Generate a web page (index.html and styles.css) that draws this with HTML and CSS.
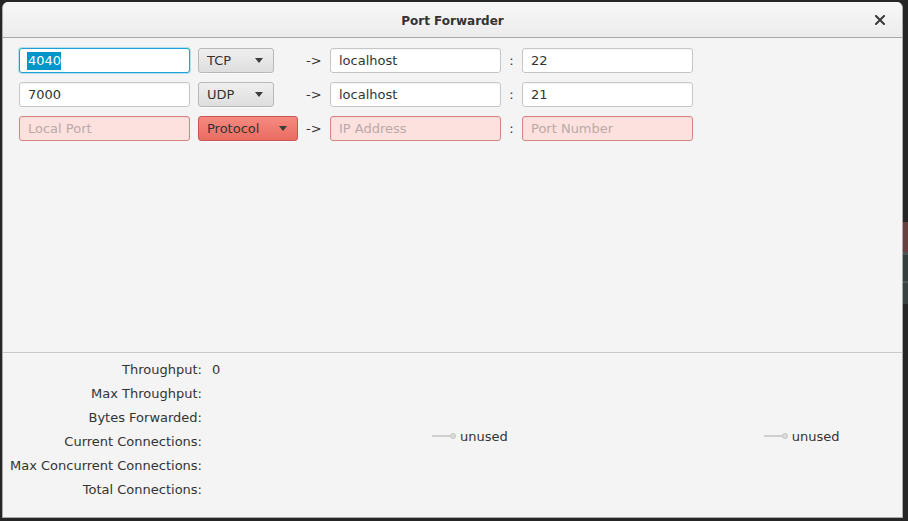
FILE: index.html
```html
<!DOCTYPE html>
<html>
<head>
<meta charset="utf-8">
<link rel="stylesheet" href="styles.css">
</head>
<body>
<div class="desk">
  <div class="window">
    <header class="titlebar">
      <span class="title">Port Forwarder</span>
      <svg class="close" width="10" height="10" viewBox="0 0 10 10"><path d="M1 1L9 9M9 1L1 9" stroke="#3a3a3a" stroke-width="2" stroke-linecap="square"/></svg>
    </header>
    <main class="rules">
      <div class="field focus"><span class="sel">4040</span></div>
      <div class="combo"><span>TCP</span><i class="tri"></i></div>
      <span class="arrow">-&gt;</span>
      <div class="field">localhost</div>
      <span class="colon">:</span>
      <div class="field">22</div>

      <div class="field">7000</div>
      <div class="combo"><span>UDP</span><i class="tri"></i></div>
      <span class="arrow">-&gt;</span>
      <div class="field">localhost</div>
      <span class="colon">:</span>
      <div class="field">21</div>

      <div class="field error"><span class="ph">Local Port</span></div>
      <div class="combo error wide"><span>Protocol</span><i class="tri"></i></div>
      <span class="arrow">-&gt;</span>
      <div class="field error"><span class="ph">IP Address</span></div>
      <span class="colon">:</span>
      <div class="field error"><span class="ph">Port Number</span></div>
    </main>
    <section class="stats">
      <dl class="metrics">
        <dt>Throughput:</dt><dd>0</dd>
        <dt>Max Throughput:</dt><dd></dd>
        <dt>Bytes Forwarded:</dt><dd></dd>
        <dt>Current Connections:</dt><dd></dd>
        <dt>Max Concurrent Connections:</dt><dd></dd>
        <dt>Total Connections:</dt><dd></dd>
      </dl>
      <div class="charts">
        <div class="legend"><svg width="24" height="8" viewBox="0 0 24 8"><line x1="0" y1="4" x2="19" y2="4" stroke="#cfcfcf" stroke-width="2"/><circle cx="21" cy="4" r="2.5" fill="#dcdcdc" stroke="#c4c4c4" stroke-width="1"/></svg><span>unused</span></div>
        <div class="legend"><svg width="24" height="8" viewBox="0 0 24 8"><line x1="0" y1="4" x2="19" y2="4" stroke="#cfcfcf" stroke-width="2"/><circle cx="21" cy="4" r="2.5" fill="#dcdcdc" stroke="#c4c4c4" stroke-width="1"/></svg><span>unused</span></div>
      </div>
    </section>
  </div>
  <div class="peek">
    <div class="band dark1"></div>
    <div class="band red"></div>
    <div class="band line"></div>
    <div class="band slate1"></div>
    <div class="band sep"></div>
    <div class="band slate2"></div>
    <div class="band rest"></div>
  </div>
</div>
</body>
</html>
```
FILE: styles.css
```css
* { box-sizing: border-box; }
html, body { margin: 0; padding: 0; }
body {
  background: #262626;
  width: 908px;
  height: 521px;
  overflow: hidden;
  font-family: "DejaVu Sans", sans-serif;
  font-size: 13px;
  color: #333;
}
.desk {
  display: flex;
  padding: 2px 0 0 2px;
  height: 521px;
}
.window {
  width: 901px;
  height: 516px;
  display: flex;
  flex-direction: column;
  background: #f4f4f4;
  border: 1px solid #a9a9a9;
  border-top: none;
  border-radius: 6px 6px 0 0;
  overflow: hidden;
}
.titlebar {
  height: 36px;
  flex: none;
  display: grid;
  grid-template-columns: 1fr auto 1fr;
  align-items: center;
  background: linear-gradient(#f7f7f7, #ececec);
  border-bottom: 1px solid #a8a8a8;
}
.title {
  grid-column: 2;
  font-weight: bold;
  font-size: 12px;
  color: #333;
  padding-top: 2px;
}
.close {
  grid-column: 3;
  justify-self: end;
  margin-right: 17px;
  margin-top: 1px;
}
.rules {
  height: 314px;
  flex: none;
  display: grid;
  grid-template-columns: 171px 100px 16px 171px 5px 171px;
  grid-auto-rows: 25px;
  column-gap: 8px;
  row-gap: 9px;
  align-content: start;
  align-items: center;
  padding: 10px 0 0 16px;
}
.field {
  height: 25px;
  background: #fff;
  border: 1px solid #c6c6c6;
  border-radius: 3px;
  padding: 0 8px;
  display: flex;
  align-items: center;
  box-shadow: inset 0 1px 1px rgba(0,0,0,0.04);
  white-space: nowrap;
}
.field.focus {
  border-color: #1ea1d6;
  box-shadow: 0 0 0 1px rgba(3,158,211,0.25);
  padding-left: 7px;
}
.sel {
  background: #0096c9;
  color: #fff;
  line-height: 18px;
  padding-left: 1px;
}
.field.error {
  background: #fde1de;
  border-color: #d4857f;
}
.ph { color: #b9a9a8; }
.combo {
  width: 76px;
  height: 25px;
  display: flex;
  align-items: center;
  justify-content: space-between;
  padding: 0 8px 0 8px;
  border: 1px solid #b8b8b8;
  border-radius: 3px;
  background: linear-gradient(#efefef, #dedede);
  box-shadow: 0 1px 0 rgba(255,255,255,0.6);
}
.combo.wide { width: 100px; }
.combo.error {
  background: linear-gradient(#f58a80, #ea6c61);
  border-color: #c7574e;
}
.tri {
  width: 0;
  height: 0;
  border-left: 4.5px solid transparent;
  border-right: 4.5px solid transparent;
  border-top: 5px solid #3c3c3c;
  margin-right: 2px;
}
.arrow { white-space: nowrap; }
.colon { text-align: center; }
.stats {
  flex: 1;
  border-top: 1px solid #c9c9c9;
  display: flex;
  align-items: center;
}
.metrics {
  margin: 0;
  align-self: flex-start;
  padding-top: 4px;
  display: grid;
  grid-template-columns: 199px 20px;
  column-gap: 10px;
  grid-auto-rows: 24px;
  align-items: center;
}
.metrics dt { text-align: right; white-space: nowrap; }
.metrics dd { margin: 0; }
.charts {
  display: flex;
  gap: 256px;
  margin-left: 200px;
  margin-top: 2px;
}
.legend {
  display: flex;
  align-items: center;
  gap: 4px;
}
.peek {
  flex: 1;
  display: flex;
  flex-direction: column;
}
.band { flex: none; }
.dark1 { height: 220px; background: #252525; }
.red { height: 30px; background: #6a3f3f; }
.line { height: 3px; background: #4d5555; }
.slate1 { height: 26px; background: #363d3d; }
.sep { height: 2px; background: #4f5656; }
.slate2 { height: 21px; background: #3a4141; }
.rest { flex: 1; background: #262626; }
```
